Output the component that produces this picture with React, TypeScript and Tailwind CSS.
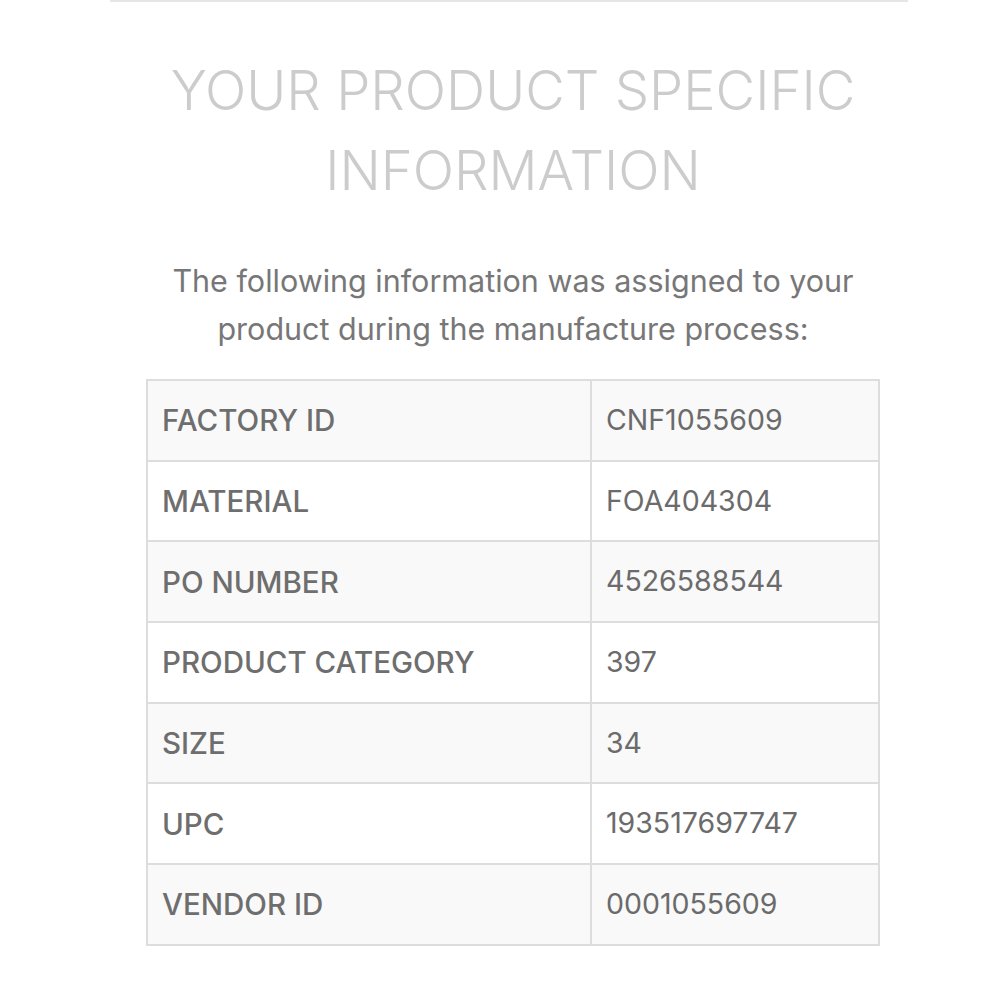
const rows = [
  { label: "FACTORY ID", value: "CNF1055609" },
  { label: "MATERIAL", value: "FOA404304" },
  { label: "PO NUMBER", value: "4526588544" },
  { label: "PRODUCT CATEGORY", value: "397" },
  { label: "SIZE", value: "34" },
  { label: "UPC", value: "193517697747" },
  { label: "VENDOR ID", value: "0001055609" },
];

const App = () => {
  return (
    <div className="min-h-screen bg-white font-['Inter',sans-serif]">
      <div className="ml-[110px] w-[798px] border-t-2 border-[#e6e6e6] pt-12">
        <div className="ml-[36px] w-[734px]">
          <h1 className="text-center text-[54.4px] font-light leading-[80px] text-[#cccccc]">
            YOUR PRODUCT SPECIFIC INFORMATION
          </h1>
          <p className="mx-auto mt-[47px] w-[700px] text-center text-[30.5px] leading-[48px] text-[#777777]">
            The following information was assigned to your product during the
            manufacture process:
          </p>
          <table className="mt-[26px] w-full border-collapse border-2 border-[#dddddd] text-[28.5px] text-[#6b6b6b]">
            <tbody>
              {rows.map((row, index) => (
                <tr
                  key={row.label}
                  className={index % 2 === 0 ? "bg-[#f9f9f9]" : "bg-white"}
                >
                  <td className="h-[80.7px] w-[444px] border-2 border-[#dddddd] px-[14px] text-[29.5px] font-medium text-[#6e6e6e]">
                    {row.label}
                  </td>
                  <td className="h-[80.7px] border-2 border-[#dddddd] px-[14px]">
                    {row.value}
                  </td>
                </tr>
              ))}
            </tbody>
          </table>
        </div>
      </div>
    </div>
  );
};

export default App;
